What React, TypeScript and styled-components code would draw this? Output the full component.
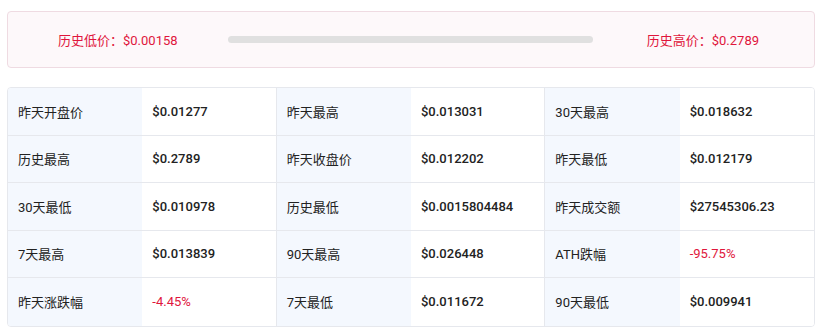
import * as React from 'react';
import styled, { createGlobalStyle } from 'styled-components';

type Stat = {
  label: string;
  value: string;
  negative?: boolean;
};

const stats: Stat[] = [
  { label: '昨天开盘价', value: '$0.01277' },
  { label: '昨天最高', value: '$0.013031' },
  { label: '30天最高', value: '$0.018632' },
  { label: '历史最高', value: '$0.2789' },
  { label: '昨天收盘价', value: '$0.012202' },
  { label: '昨天最低', value: '$0.012179' },
  { label: '30天最低', value: '$0.010978' },
  { label: '历史最低', value: '$0.0015804484' },
  { label: '昨天成交额', value: '$27545306.23' },
  { label: '7天最高', value: '$0.013839' },
  { label: '90天最高', value: '$0.026448' },
  { label: 'ATH跌幅', value: '-95.75%', negative: true },
  { label: '昨天涨跌幅', value: '-4.45%', negative: true },
  { label: '7天最低', value: '$0.011672' },
  { label: '90天最低', value: '$0.009941' },
];

const GlobalStyle = createGlobalStyle`
  body {
    margin: 0;
    background: #ffffff;
    font-family: Roboto, "Noto Sans CJK SC", sans-serif;
    font-size: 13px;
    color: #222222;
  }
`;

const Page = styled.div`
  padding: 11px 7px;
  display: flex;
  flex-direction: column;
  gap: 19px;
`;

const RangeCard = styled.div`
  height: 55px;
  display: flex;
  align-items: center;
  padding: 0 55px 0 50px;
  background: #fdf8fa;
  border: 1px solid #efdbe2;
  border-radius: 4px;
`;

const RangeText = styled.span`
  color: #e0163c;
  font-size: 13px;
  white-space: nowrap;
`;

const Track = styled.div`
  flex: 1;
  height: 7px;
  margin: 0 54px 0 50px;
  border-radius: 4px;
  background: #e0e0e0;
`;

const Table = styled.div`
  display: grid;
  grid-template-columns: repeat(6, 1fr);
  border: 1px solid #e6e8ed;
  border-radius: 4px;
  overflow: hidden;
`;

const Cell = styled.div<{ $label?: boolean; $last?: boolean; $bottom?: boolean; $red?: boolean }>`
  height: 47.5px;
  box-sizing: border-box;
  display: flex;
  align-items: center;
  padding-left: 10px;
  background: ${(p) => (p.$label ? '#f4f8fe' : '#ffffff')};
  border-bottom: ${(p) => (p.$bottom ? 'none' : '1px solid #e6e8ed')};
  border-right: ${(p) => (p.$label || p.$last ? 'none' : '1px solid #e6e8ed')};
  color: ${(p) => (p.$red ? '#e0163c' : '#222222')};
  font-weight: ${(p) => (p.$label || p.$red ? 400 : 500)};
  white-space: nowrap;
`;

export default function App() {
  return (
    <>
      <GlobalStyle />
      <Page>
        <RangeCard>
          <RangeText>历史低价：$0.00158</RangeText>
          <Track />
          <RangeText>历史高价：$0.2789</RangeText>
        </RangeCard>
        <Table>
          {stats.map((s, i) => {
            const bottom = i >= stats.length - 3;
            const last = i % 3 === 2;
            return (
              <React.Fragment key={s.label}>
                <Cell $label $bottom={bottom}>{s.label}</Cell>
                <Cell $bottom={bottom} $last={last} $red={s.negative}>
                  {s.value}
                </Cell>
              </React.Fragment>
            );
          })}
        </Table>
      </Page>
    </>
  );
}
